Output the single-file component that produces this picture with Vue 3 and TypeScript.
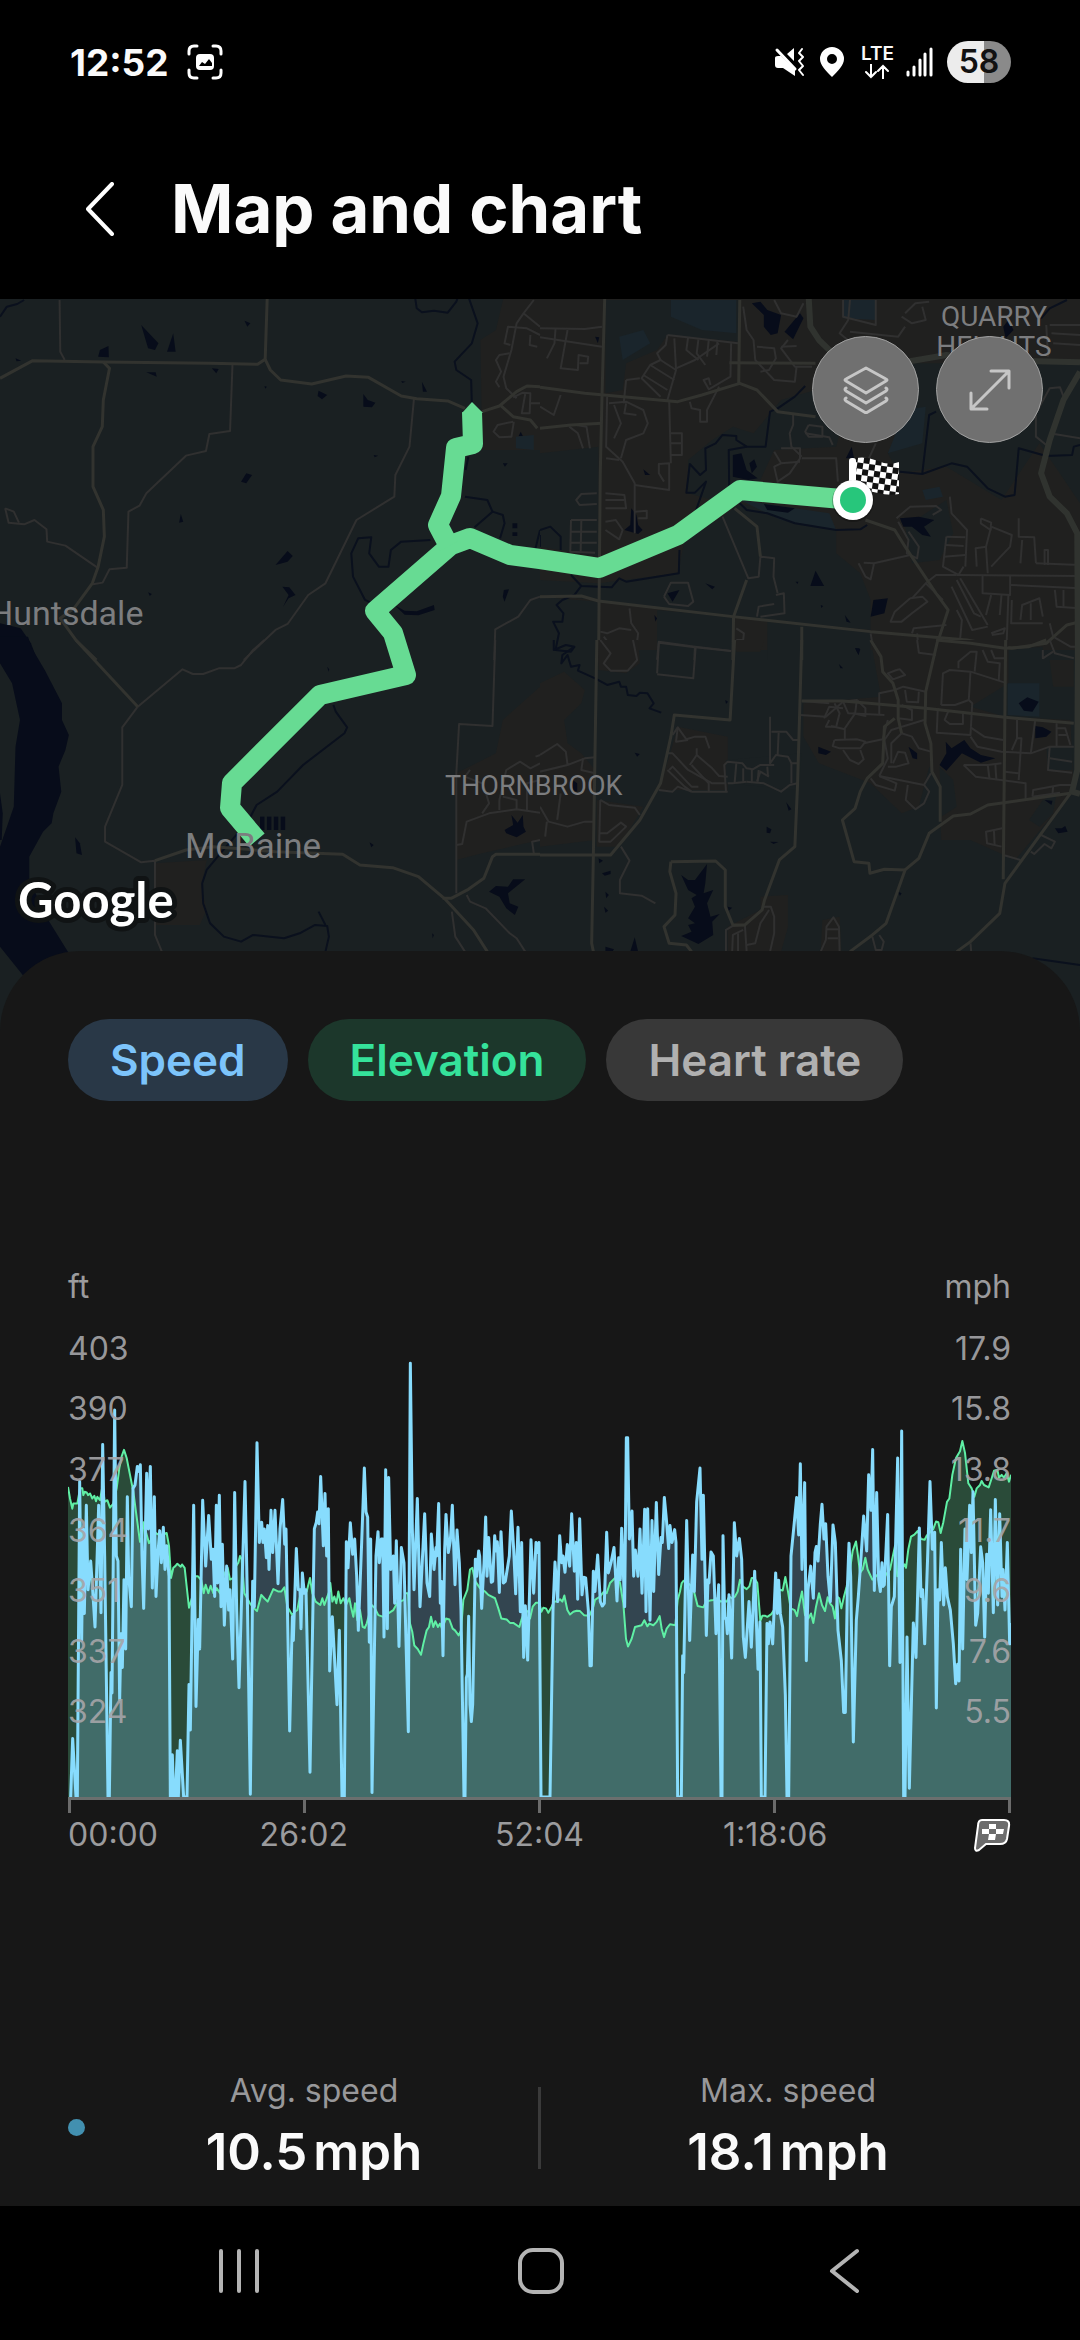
<script setup lang="ts">
import { computed, ref } from 'vue'

interface Tile {
  x: number
  y: number
  urban: string[]
  rural: string[]
  park: string[]
  water: string[]
  streams: string[]
  minor: string[]
  major: string[]
  highway: string[]
}

interface Segment {
  offset: number
  points: string
}

// Each tile covers 540 map units in width and has its own finer grid.
const tiles: Tile[] = [
  {
    x: 0,
    y: 300,
    urban: ['1465,-20 1568,-20 1568,450 1400,450 1395,120 1440,90'],
    rural: [],
    park: ['1498,410 1550,405 1550,450 1498,445'],
    water: [
      '410,75 460,130 450,150 430,145', '503,100 510,155 485,155', '315,138 316,172 285,170 290,150',
      '710,62 727,70 718,80', '425,217 452,217 455,230', '615,205 635,207 628,220',
      '925,272 950,285 935,298 922,288', '1055,282 1068,300 1090,308 1080,322 1055,320',
      '1225,245 1240,275 1228,275', '700,545 715,520 732,525 715,550', '525,642 532,665 520,668',
      '800,795 835,753 850,768 835,785', '820,860 840,862 858,885 838,895 822,920 838,885',
      '1463,870 1478,868 1465,905 1460,890', '0,970 60,985 90,1030 108,1080 0,1080',
      '1488,670 1502,670 1502,685 1488,685', '1488,697 1502,697 1502,708 1488,708',
      '45,175 62,182 48,184', '430,877 441,882 435,888', '1085,465 1098,467 1088,472', '1460,490 1474,490 1466,500',
      '1512,395 1518,408 1506,408', '768,258 775,260 770,266', '1165,243 1178,245 1168,249',
      '1145,915 1175,932 1210,934 1260,915 1262,930 1215,946 1175,944',
    ],
    streams: [
      '1205,-10 1210,25 1225,37 1260,32 1300,38 1325,5 1330,-10',
      '1360,-10 1387,70 1370,130 1320,185 1325,210 1368,240 1370,310',
      '0,50 20,20 50,12 70,0', '1350,590 1415,600 1430,635 1378,682', '1430,635 1460,645 1465,670 1452,715',
      '1250,720 1165,725 1135,750 1128,800 1100,800 1072,760 1078,712 1040,715 1020,760 1025,830 1060,900 1120,930',
      '1568,690 1555,745', '1360,470 1352,510',
    ],
    minor: [
      '173,0 175,155 188,180',
      '675,195 668,393 608,402 598,453 540,467 425,580 405,617 373,635 368,803 318,808 298,848 270,853',
      '15,625 25,668 70,673 100,660 135,688 137,725 190,737 283,803', '15,625 40,635 55,668',
      '1202,296 1189,440 1148,525 1145,590 1035,660 945,850 895,885 835,972 800,990 708,1080',
      '1568,890 1540,900 1505,950 1438,988 1435,1080',
      '1550,0 1520,40 1500,70 1485,150 1462,230 1470,265 1500,295', '1482,135 1465,130 1475,80 1530,85 1568,105',
      '1520,40 1568,80', '1480,160 1450,165 1440,180 1455,215 1440,245 1450,262',
      '1490,365 1445,375 1433,395 1450,412 1485,410 1492,365', '1490,292 1518,278 1540,280 1538,340 1515,340 1525,282',
      '1540,105 1538,135 1560,140', '1540,310 1568,310',
    ],
    major: [
      '0,235 95,182 300,186 610,190 748,193 770,178 776,-10',
      '770,178 785,210 815,240 905,252 1005,228 1070,232 1165,288 1210,296 1300,303 1350,325',
      '300,186 318,205 300,300 297,380 270,440 270,560 300,630 303,710 285,800 268,850 215,925 175,955 220,1020 280,1080',
      '1400,335 1450,318 1500,275 1530,258 1568,260', '1455,318 1490,350 1540,360 1560,385',
    ],
    highway: [],
  },
  {
    x: 540,
    y: 300,
    urban: [],
    rural: [
      '190,0 580,0 575,125 370,105 340,150 250,190 240,270 190,280',
      '0,460 170,440 170,770 0,740',
      '430,480 500,420 560,380 620,400 660,350 700,300 800,270 870,400 860,440 680,450 640,540 500,600 430,580',
      '0,840 170,850 400,820 420,720 530,650 580,610 860,690 860,760 930,820 960,900 960,990 560,950 170,900 0,885',
      '0,890 170,905 170,1080 0,1080', '340,930 560,950 560,1080 340,1080', '660,965 960,995 960,1080 660,1080',
      '1030,190 1568,190 1568,610 1450,430 1340,600 1180,500 1040,520 1010,460 1080,350',
      '1060,680 1180,600 1200,700 1160,780 1080,790', '1360,1050 1460,1040 1460,1080 1360,1080',
    ],
    park: [
      '380,0 570,0 570,100 470,90 380,50', '880,0 975,0 975,60 880,55', '230,110 300,90 320,130 240,180',
      '1060,330 1120,320 1110,430 1010,460', '580,600 840,640 860,690 700,660', '1110,570 1160,560 1170,590 1120,600',
    ],
    water: [
      '615,10 640,5 660,30 700,45 690,100 670,105 650,80 650,45', '710,95 755,40 765,55 735,118',
      '560,465 585,460 600,510 632,535 605,540 560,530', '608,490 622,478 630,500 615,520',
      '265,625 280,645 285,675 298,690 285,702 245,690 262,675', '800,812 825,858 785,858',
      '968,900 1010,895 1000,940 960,950', '1045,655 1100,650 1145,660 1115,680 1135,710 1110,705 1080,680 1055,680',
      '370,880 405,870 385,905', '480,850 508,860 500,868', '1360,60 1375,90 1352,115 1345,80', '905,440 912,475 888,475',
      '885,945 902,968 890,965', '300,508 320,525 305,525', '650,612 740,625 720,638 660,630', '915,1045 928,1045 925,1065',
      '160,110 172,112 168,130', '332,945 340,955 335,965', '742,845 750,845 748,852', '815,915 822,918 817,924',
    ],
    streams: [
      '770,258 740,290 690,325 668,335 655,440 600,440 570,420 570,408 530,405 510,430 480,445 482,510 465,525 435,492 425,578 450,578 482,545 450,640',
      '550,620 548,450 600,440', '580,610 600,630 660,640 740,670 860,690 930,688 950,675',
      '1568,435 1550,440 1545,465 1470,468 1390,445 1378,585 1350,590 1300,565 1240,500 1195,490 1110,522 1045,515',
      '1110,520 1130,345 1150,335', '1455,55 1480,25 1530,0', '405,750 403,820 250,845 230,835 208,862 120,858 90,825',
      '120,858 100,885 65,900 48,915 68,940 65,965 38,965 55,1000 45,1050 90,1055 100,1040', '0,690 30,680 60,710 60,750', '0,705 0,740',
    ],
    minor: [
      '0,85 130,87 180,80', '0,112 180,140', '45,87 42,130 20,175', '80,90 60,205 110,210 112,165 140,170 138,190 115,190',
      '0,320 40,345 60,285', '85,380 110,400 125,445', '105,375 135,380 145,445', '370,105 575,130', '370,105 365,135 340,160 350,180 320,195 295,235 350,290',
      '390,115 395,210 370,300', '320,195 390,240', '350,180 395,210', '300,225 370,270', '250,240 290,235', '250,240 243,310',
      '395,205 450,180 520,130', '430,112 425,150 460,180', '460,118 455,160 480,195', '490,120 485,170', '515,125 512,165', '555,130 553,230 490,268 475,240 490,235 495,255',
      '195,290 192,440 240,485 275,550 275,700', '200,310 250,305 300,330 313,370 300,400 250,420 235,475', '215,315 235,370 215,415', '250,310 245,340 280,345',
      '375,300 380,490', '380,400 412,400 412,465 380,465', '380,430 410,430', '192,475 230,480', '275,555 375,570 375,490 345,492 345,520 360,545',
      '435,305 440,325 465,330 465,365 485,365 485,330 520,260', '190,580 245,585 250,625 190,625', '190,600 245,600', '190,665 220,660 240,690 230,718 190,690', '275,635 310,632 310,655 285,655',
      '90,660 165,660', '90,660 88,755 160,758', '88,695 165,695', '88,728 165,728', '120,662 118,755', '165,580 120,582 105,600 115,615 165,612',
      '590,20 600,90 620,120 625,180 680,240 740,245 745,200', '630,140 680,145 685,175 665,210 640,215', '700,140 745,138', '720,120 700,145 740,200 790,200', '680,0 700,40 745,50 765,10',
      '735,345 735,375 725,400 730,440 760,470', '770,400 840,412 850,435', '780,375 820,380 820,410 780,410 770,395 780,375', '700,445 755,445 755,475 725,520 690,545 680,500 700,490 755,485', '680,455 700,490',
      '760,475 860,475 865,545', '975,430 955,475', '900,0 895,60 870,100 900,125 970,125', '880,0 880,50 975,75 975,0', '1060,40 1090,10 1130,5', '1050,50 1080,70 1120,60 1110,20', '900,95 1040,110 1060,80',
      '1480,75 1568,75', '1485,100 1568,105', '1490,130 1568,135', '1470,75 1475,170', '1440,340 1480,265 1510,262 1520,290', '1440,340 1440,410 1470,435', '1480,400 1568,415',
      '360,890 380,848 430,848 445,905 430,918 375,912 360,890', '530,650 605,835 635,830 640,770 680,775 678,830 690,880', '685,885 708,880 710,940 640,950', '630,950 635,920 680,912',
      '925,790 945,830 960,838 970,790 940,788', '970,790 1075,765', '260,925 265,970 285,1000 275,1080', '175,995 195,1000 230,985 265,990', '185,1010 200,1030 190,1060', '340,1080 345,1025 450,1040 555,1053', '450,1040 448,1080', '570,985 592,1000 590,1020 570,1020',
      '1035,655 1075,620 1150,618 1165,630 1140,645', '1040,665 1070,720 1065,760 1095,775 1100,740 1070,695', '1190,590 1195,640 1240,690 1235,800', '1180,710 1235,712', '1178,735 1230,738', '1172,770 1235,765', '1180,710 1170,800 1215,825 1230,800',
      '1280,655 1310,668 1308,690 1280,670 1280,655', '1310,680 1295,740 1300,820', '1295,740 1265,745 1268,800', '1310,680 1370,705 1365,740 1310,800', '1390,655 1390,710 1435,712 1440,790', '1400,720 1395,790', '1210,825 1568,828', '1440,790 1568,795',
      '1285,825 1285,880 1365,885 1365,828', '1365,855 1568,865', '1360,885 1355,1030', '1310,885 1295,945', '1340,885 1335,945', '1210,840 1260,940 1280,950', '1195,860 1255,990 1300,980', '1220,835 1300,975',
      '1075,895 1110,890 1125,905 1080,940 1050,965 1018,965 1030,935 1075,895', '1080,895 1120,850 1150,825 1210,825', '1120,850 1170,900', '1395,960 1400,915 1450,895 1460,950', '1425,910 1425,960', '1370,900 1368,970 1460,970',
      '1495,870 1500,920 1568,925', '1520,870 1520,920', '1310,1000 1350,985 1345,1000 1312,1005', '1475,795 1475,750 1465,750 1465,795', '1080,1000 1085,985 1180,975', '1095,1000 1100,1055 1150,1065',
      '960,1000 965,1030 990,1080', '1220,1020 1210,1080', '1210,930 1225,960 1220,1015', '1480,970 1490,1010 1540,1040 1568,1040', '1280,1025 1290,1060 1350,1070',
    ],
    major: [
      '188,-10 180,290 175,520 170,1080', '0,262 130,280 400,305 470,285 580,250 630,270 690,335 800,350', '0,385 90,375 180,370',
      '0,890 120,888 170,903 560,950 960,995 1240,1020 1370,1045 1470,1030 1530,975 1568,965', '945,660 1030,690 1060,740 1150,880 1185,930 1160,1010 1150,1080',
      '760,980 760,1080', '560,1080 562,950 600,840', '565,625 630,680 640,770', '580,0 577,250', '550,188 800,190', '1350,1040 1352,1080',
    ],
    highway: ['780,-10 785,80 810,120 860,170 960,200 1040,190 1180,165 1300,180 1568,187', '1568,215 1520,300 1480,420 1455,520 1480,590 1530,640 1560,700 1562,1080'],
  },
  {
    x: 0,
    y: 640,
    urban: ['450,670 600,660 585,740 600,810 580,855 450,855', '1568,140 1460,240 1440,340 1325,400 1325,660 1400,640 1568,600'],
    rural: [],
    park: [],
    water: [
      '0,-50 70,-50 90,20 130,90 180,190 180,240 200,285 190,330 170,380 178,455 155,520 150,550 125,575 85,650 85,720 140,840 200,940 70,1010 0,920 0,620 40,500 45,320 58,240 35,130 0,70',
      '0,460 8,520 5,600 0,600', '218,592 232,610 238,645 222,640', '755,530 768,530 768,570 755,570', '775,530 788,530 788,570 775,570',
      '795,530 808,530 808,570 795,570', '815,530 828,530 828,570 815,570', '1465,570 1490,555 1485,525 1503,548 1518,525 1520,560 1527,575 1500,592 1470,580',
      '1420,755 1440,738 1475,740 1490,718 1525,718 1475,760 1480,790 1505,800 1495,825 1470,805 1450,770', '1073,607 1085,615 1078,622', '950,80 956,88 954,95', '1255,880 1260,885 1256,895',
    ],
    streams: [
      '968,195 975,215 1008,262 1000,280 880,375 805,455 745,495 725,535', '690,580 640,640 600,690 587,730 590,790 610,850 650,890 700,905 735,885 825,895 870,880 915,855 950,858 955,890 945,935', '925,815 945,855',
    ],
    minor: [
      '768,0 735,30 700,75 680,85 635,85 590,102 560,102 530,88 400,200 355,262 355,435 305,560 305,605 410,667 450,662 450,885 470,935',
      '1438,0 1430,258 1333,252 1325,400 1325,760', '1325,615 1342,612 1355,545 1420,520 1500,508 1568,518',
      '1355,765 1365,785 1410,805 1480,880 1500,895 1525,935', '1312,815 1322,890 1350,935', '1400,520 1420,490 1405,440', '1450,510 1450,480 1470,390 1510,365 1540,385 1568,370',
      '1500,508 1500,480 1460,470', '1568,420 1530,430 1530,510', '1365,390 1350,410 1400,430', '1568,600 1545,605 1550,640', '1568,345 1555,350',
    ],
    major: [
      '220,0 400,200', '450,662 540,630 620,620 800,635 995,643 1045,675 1140,683 1215,710 1290,775 1375,870 1415,935',
      '1285,775 1310,775 1360,748 1405,715 1430,650 1440,643 1568,643',
    ],
    highway: [],
  },
  {
    x: 540,
    y: 640,
    urban: [
      '0,130 70,95 130,150 120,190 70,240 80,310 120,340 160,390 160,600 0,620', '165,0 285,0 290,70 250,100 170,90', '165,480 300,500 230,620 165,620',
      '400,260 545,290 545,450 345,450 375,350', '570,0 650,0 640,35 570,35', '960,0 1360,0 1360,130 1250,200 1350,230 1540,240 1550,450 1380,660 1250,600 1165,600 1160,430 1130,380 1100,500 1050,520 960,430 810,370 765,290 765,190 990,170',
      '1480,60 1550,60 1550,140 1490,140', '640,770 720,765 720,860 700,935 545,935 545,860 640,810', '820,840 870,830 875,935 815,935',
    ],
    rural: ['540,360 760,340 750,450 540,430', '1470,320 1545,320 1545,390 1475,390', '1160,380 1200,420 1210,500 1165,530', '1420,540 1460,480 1500,460 1490,520 1450,560'],
    park: ['1358,130 1450,130 1450,230 1358,225'],
    water: [
      '1390,190 1415,172 1448,185 1430,215 1405,212', '1438,258 1460,262 1485,275 1470,290 1438,295', '1160,375 1180,340 1178,305 1195,325 1232,300 1250,325 1280,345 1322,355 1280,368 1225,340 1180,392',
      '808,320 845,335 830,345 808,340', '1070,320 1095,340 1095,358 1082,355', '410,705 430,720 450,720 485,672 480,730 475,760 503,750 485,790 495,830 522,822 500,845 503,885 460,912 410,888 440,875 430,855 450,850 430,835 450,800 440,775 455,765 430,750',
      '275,892 285,935 262,935', '190,920 215,928 210,935 190,935', '715,487 730,508 722,512', '658,560 672,568 668,580 658,578', '668,605 692,606 678,612', '1495,565 1515,565 1525,558 1532,575 1505,580',
      '1465,480 1488,482 1485,495', '915,25 930,28 925,45', '868,72 880,85 872,85', '180,700 205,692 205,702 188,707', '190,755 200,765 192,775', '186,800 198,812 190,818', '275,338 290,342 282,350', '95,420 108,430 108,455 95,450',
      '170,655 183,662 172,670', '545,800 558,803 548,812', '1040,755 1050,760 1045,768', '538,180 546,185 540,192',
    ],
    streams: ['40,0 40,30 75,15 100,20 65,45 62,70 80,45 90,80 115,75 110,92 160,115 195,135 230,125 235,140 250,140 255,165 280,168 290,158 312,160 330,190 318,205 352,218', '1430,955 1568,975'],
    minor: [
      '340,100 345,8 450,22 555,33', '340,103 445,115 452,22', '175,0 205,40 185,70 205,92 255,92 282,60 270,0',
      '0,345 50,312 75,335 80,375 130,355 160,352', '80,375 0,395', '125,355 120,390 160,400', '0,500 25,545 80,560 130,545 160,545', '60,460 50,540', '20,545 15,590',
      '175,480 200,495 275,503 290,525', '175,480 172,605 205,605 250,560 235,548 195,580 175,580', '235,620 260,662 232,720 232,760 295,767 335,790',
      '345,450 385,455 400,440 440,455 545,455', '370,340 385,340 430,390 500,430 540,430', '375,390 385,380 440,440 460,440', '370,390 420,440 440,455', '435,375 455,345 455,325', '455,345 500,385 520,408 545,410', '440,375 490,430 490,455',
      '385,285 400,262 425,298 450,290 480,290 492,325', '400,262 395,305 430,300', '540,455 535,375 545,365 588,370 600,385 618,388', '545,430 560,430 600,425', '570,370 565,430', '590,385 590,425', '615,425 615,390 640,375 680,375',
      '668,230 668,370 685,345 720,350 730,370 748,370', '672,275 715,275 735,300 750,300', '693,278 690,345', '730,370 730,430', '630,425 640,395 665,410', '660,380 662,410', '600,425 650,430 700,455 725,435 748,430', '635,390 632,425',
      '755,225 830,230 880,185 920,180 945,205 945,228 910,220', '855,190 870,220 860,260 830,260 840,240', '880,205 840,200 825,235', '760,183 840,190', '880,185 895,220 1000,225', '920,180 915,220 885,265 885,300', '845,258 885,268',
      '855,300 850,318 870,325 930,325 945,305 920,298 855,300', '940,310 995,298 1010,240', '880,330 900,360 925,372 940,358 930,330', '985,225 985,160 1030,150 1055,140 1120,155', '1035,90 1010,100 1025,118 1060,105 1045,88 1035,90',
      '1060,150 1065,185 1098,187 1100,155', '1050,195 1080,210 1080,240 1040,235', '1115,240 1020,270 1000,300 1010,355 985,408', '1050,280 1080,290 1100,325 1135,335', '1010,380 1035,380 1070,370 1060,338 1040,335 1025,370', '1050,280 1020,310 1020,370',
      '960,415 975,435 1030,452 1035,430 985,408', '985,408 1115,435 1135,400', '1068,435 1062,480 1090,508 1115,490 1130,455 1115,435', '1165,195 1170,100 1190,90 1250,95 1350,128', '1250,95 1245,180 1255,190 1250,285 1152,278 1155,205',
      '1165,195 1205,195 1245,180', '1185,215 1175,240 1190,252 1228,252 1228,215', '1215,85 1215,65 1250,35 1268,35 1262,95', '1285,30 1300,65 1335,70 1332,120', '1310,30 1320,55 1350,55',
      '1250,262 1290,290 1345,300', '1250,290 1270,320 1340,335 1425,340 1480,320 1550,320', '1385,240 1385,295 1370,330', '1385,295 1398,295 1390,420', '1350,395 1390,400', '1230,375 1265,410 1410,430 1410,480', '1230,375 1300,375 1340,370', '1300,375 1305,415', '1322,372 1325,418',
      '1438,240 1425,340', '1480,320 1475,390 1545,398', '1480,355 1545,365', '1500,250 1500,318', '1500,265 1525,265 1540,315', '1505,285 1530,285', '1430,470 1432,450 1510,435 1545,435', '1430,470 1510,458', '1490,440 1488,462',
      '1342,565 1295,575 1298,610 1340,620', '1318,570 1320,615', '1345,645 1395,660', '1455,585 1495,605 1485,625 1465,612 1435,642 1425,635', '1095,0 1100,38 1150,45',
      '965,890 975,930 992,930 998,905 985,885', '815,935 830,900 832,860 852,832 868,860 870,935', '832,868 868,868', '835,895 865,895', '540,935 540,870 560,858 595,855 600,935', '558,935 560,885 590,870', '575,935 575,880', '650,800 670,800 680,830 680,880 668,935', '665,810 640,850 625,910 600,915',
      '1250,910 1252,935', '1480,0 1495,40 1550,55', '1460,30 1460,55 1490,35',
    ],
    major: [
      '165,0 155,645 150,910 155,935', '565,0 552,240 390,225 380,290 350,430 290,540 205,645 0,645',
      '380,665 510,663 538,690 538,800 560,855 595,855 645,810 652,780 695,660 740,620 748,430 760,0', '380,665 377,695 395,760 392,825 360,860 375,910 425,915 440,935',
      '760,183 880,183 1120,205 1350,232 1550,250', '960,0 990,50 995,95 1025,130 1040,180 1040,235 1050,280', '1155,0 1120,155 1118,250 1135,310 1138,395 1162,440 1162,545',
      '1030,235 1000,260 995,370 950,415 930,455 915,505 878,540 912,665 955,670 958,700 1000,688 1060,690', '1540,460 1300,495 1250,522 1200,528 1130,580 1100,655 1060,690 1005,850 965,885 900,935',
      '1352,0 1345,718', '1150,0 1250,10 1350,25 1420,20 1470,0', '1540,460 1350,730 1335,820 1250,905 1210,935',
    ],
    highway: ['1562,0 1560,390 1545,455 1568,462'],
  },
]

const routes = [
  '853,500 740,490 678,535 599,568 540,559 510,555 470,538 451,545 375,611 393,633 406,675 320,695 232,783 230,808 257,840',
  '472,412 473,444 456,448 451,496 438,525 449,546',
]

const speed: Segment[] = [
  {
    offset: -54,
    points:
      '62,1353 68,1180 78,1353 82,1353 89,420 95,890 99,560 103,810 109,490 114,740 122,655 128,740 135,850 146,490 153,808 158,310 164,640 174,1353 178,1353 183,985 186,1045 194,208 199,640 204,655 209,1065 213,870 217,970 222,710 227,915 232,465 236,700 244,790 249,440 255,430 262,375 267,390 271,370 276,640 281,795 290,395 295,560 301,375 307,735 313,465 318,760 324,630 329,565 334,660 340,555 345,680 350,610 357,700 361,1353 364,1353 367,1228 371,1353 376,1353 382,1216 385,1353 391,1185 401,1353 411,1353 417,1020 421,1155 431,490 438,1085 445,828 449,915 458,475 467,670 476,520 484,650 489,620 494,760 499,490 503,720 508,460 513,790 517,605 523,845 530,670 536,800 540,740 548,945 554,452 560,800 567,1030 585,420 592,760 601,1345 608,715 613,790 621,305 628,600 635,540 639,600 643,560 649,645 653,550 657,680 663,505 668,630 675,505 684,722 690,560 698,473 704,605 708,560 719,1158 727,820 730,890 739,618 745,740 750,740 753,855 757,690 763,750 768,740 780,1280 793,560 799,540 803,510 807,545 812,405 820,610 825,455 830,640 835,500 839,980 847,820 861,1080 868,860 876,1353 883,1353 889,598 894,675 901,542 908,635 914,590 920,700 925,860 935,600 943,380 948,510 953,525 958,895 962,590 966,1340 978,640 984,568 988,660 994,590 998,590 1002,880 1007,385 1012,855 1016,408 1022,680 1030,640 1034,780',
  },
  {
    offset: 936,
    points:
      '49,595 57,908 64,615 72,660 85,1160 91,70 97,560 102,740 112,470 120,790 134,515 141,720 149,760 154,575 162,680 168,615 170,640 176,485 181,780 184,715 189,935 194,620 198,517 205,630 211,595 217,490 225,725 231,563 238,660 243,800 252,1353 255,1353 259,1000 262,990 266,818 270,1080 274,1130 278,1080 286,650 290,700 296,625 299,640 305,795 312,660 317,525 321,700 326,585 334,718 338,715 344,580 348,625 352,598 358,748 363,568 370,720 376,715 388,640 394,507 401,620 407,752 414,555 421,805 425,600 431,940 436,787 443,948 453,592 461,750 468,600 473,630 477,600 483,1353 510,1353 519,800 525,658 533,775 539,580 545,660 549,640 555,688 562,606 569,670 575,515 583,685 589,600 593,768 599,530 606,755 612,703 617,705 625,800 630,965 634,965 640,685 645,745 653,637 661,775 667,788 673,780 680,570 685,690 693,660 702,615 711,773 716,645 721,710 725,558 734,790 739,290 743,290 748,590 756,507 761,700 766,622 774,700 780,560 786,750 794,502 798,805 803,500 810,830 816,535 821,745 829,482 836,695 843,585 847,600 853,467 859,530 866,618 870,550 876,600 884,562 888,600 893,1353 904,1353 908,935 911,985 920,535 929,890 938,637 943,745 950,480 960,380 966,650 970,460 979,875 984,710 987,720 993,628 1000,640 1008,870 1016,725 1023,1353 1026,1353',
  },
  {
    offset: 1896,
    points:
      '69,580 74,820 79,830 82,870 87,755 95,942 103,542 110,640 118,588 125,650 130,880 136,940 147,775 154,910 164,685 174,975 180,835 184,1353 195,1353 201,840 205,900 210,835 218,900 227,690 232,810 236,712 241,810 248,850 256,1050 261,1353 266,1353 273,640 281,560 290,467 296,578 301,367 306,680 314,423 319,950 324,740 332,670 340,765 345,630 349,612 354,655 361,545 366,487 372,590 377,545 384,700 391,775 399,548 406,600 414,860 424,950 431,1103 436,1103 442,740 447,602 452,700 460,1190 469,830 475,760 482,660 491,522 500,625 506,400 513,505 518,325 523,742 530,452 536,710 541,745 546,660 549,730 553,725 563,517 569,965 574,790 583,760 593,350 600,955 605,270 611,1353 615,1353 621,880 628,1327 640,838 648,940 658,557 663,760 668,740 674,900 683,640 690,420 697,620 704,570 709,1090 714,740 719,770 724,600 731,785 736,675 742,760 751,800 760,900 767,1018 773,960 777,1010 782,620 788,915 795,560 801,710 809,490 814,630 819,450 827,845 833,810 842,613 848,660 854,880 860,635 865,750 872,503 880,808 886,473 893,785 899,515 906,760 909,680 915,800 922,600 929,900 933,838',
  },
]

const elevation: Segment[] = [
  {
    offset: -54,
    points:
      '54,436 60,470 67,500 70,485 82,485 90,440 97,440 100,460 104,450 110,452 114,460 120,455 127,470 133,462 138,478 142,465 150,475 158,430 164,480 172,475 180,497 190,485 200,440 208,380 215,345 222,326 230,350 240,400 250,450 258,510 270,598 276,585 281,540 288,570 297,602 305,590 318,572 330,580 340,575 350,572 357,610 363,705 370,675 376,670 382,663 392,672 396,665 404,675 410,730 417,793 424,770 430,750 436,700 444,700 454,712 461,750 467,725 475,750 482,728 490,750 500,735 510,750 520,700 533,675 540,710 550,705 558,670 565,660 570,640 575,650 583,750 600,780 612,795 621,803 634,755 643,765 653,775 670,738 684,745 694,745 703,733 712,790 718,800 727,815 735,805 742,800 750,760 760,735 770,745 780,705 787,750 797,775 811,785 817,765 823,785 832,760 838,745 841,720 847,775 853,760 859,780 865,745 872,780 880,765 888,785 898,765 903,790 910,820 915,780 922,830 930,800 938,850 944,853 950,840 965,785 975,795 985,815 1000,820 1015,810 1030,800 1044,775',
  },
  {
    offset: 936,
    points:
      '60,775 72,770 76,750 84,750 90,840 97,865 103,905 113,915 123,932 130,900 140,860 147,850 153,820 160,850 166,833 174,850 180,840 186,855 198,825 208,828 218,855 225,860 236,875 243,860 250,770 262,740 270,680 277,675 286,715 300,735 315,745 325,755 345,765 355,795 364,825 380,828 390,838 400,838 418,850 424,830 435,800 445,805 450,825 458,790 468,778 478,778 484,805 490,793 498,795 505,808 515,790 522,775 530,775 540,768 547,775 553,757 562,800 570,813 580,805 590,802 600,803 612,815 628,817 640,790 645,770 660,760 672,745 680,750 690,720 700,710 710,700 720,720 730,780 738,885 744,908 755,885 765,850 785,845 793,830 802,848 808,840 820,845 830,835 839,818 845,855 852,880 860,855 870,842 886,845 893,770 900,745 905,720 911,713 920,718 930,725 942,745 953,788 970,792 978,775 990,772',
  },
  {
    offset: 1896,
    points:
      '40,770 52,765 62,775 72,772 80,775 88,760 95,765 105,760 113,745 120,710 128,730 140,738 148,730 155,705 163,705 172,720 181,832 187,817 196,817 202,820 214,812 222,800 230,760 240,740 248,742 256,702 264,745 272,795 284,800 291,818 297,785 306,745 315,815 325,825 333,810 340,838 348,790 357,750 366,785 375,803 383,762 390,780 398,790 405,825 411,760 418,765 424,795 432,760 440,730 450,680 458,625 468,597 474,640 480,690 488,680 496,645 503,680 517,710 528,700 538,690 550,710 560,692 570,680 585,610 592,700 606,675 614,665 618,675 625,620 633,583 643,577 653,566 663,590 674,592 680,580 690,570 700,560 708,538 715,540 722,572 730,540 741,480 748,470 757,400 768,350 780,330 787,300 795,335 805,425 815,440 823,465 830,440 840,430 845,418 852,430 866,437 875,410 882,388 892,385 897,408 905,400 912,408 920,395 927,420 933,400',
  },
]

const baseline = 1353

function joinSegments(segments: Segment[]): string {
  return segments
    .flatMap(({ offset, points }) =>
      points.split(' ').map((pair) => {
        const [x, y] = pair.split(',').map(Number)
        return `${x + offset},${y}`
      }),
    )
    .join(' ')
}

function closeArea(line: string): string {
  const pairs = line.split(' ')
  const first = pairs[0].split(',')[0]
  const last = pairs[pairs.length - 1].split(',')[0]
  return `${first},${baseline} ${line} ${last},${baseline}`
}

const speedLine = computed(() => joinSegments(speed))
const elevationLine = computed(() => joinSegments(elevation))

const metrics = ref([
  { id: 'speed', label: 'Speed', on: true },
  { id: 'elevation', label: 'Elevation', on: true },
  { id: 'heart', label: 'Heart rate', on: false },
])
const isOn = (id: string) => metrics.value.some((m) => m.id === id && m.on)

const feet = ['403', '390', '377', '364', '351', '337', '324']
const mph = ['17.9', '15.8', '13.8', '11.7', '9.6', '7.6', '5.5']
const times = ['00:00', '26:02', '52:04', '1:18:06']
</script>

<template>
  <div class="screen">
    <div class="status">
      <div class="status-side">
        <span class="clock">12:52</span>
        <svg class="ic-shot" viewBox="0 0 36 36" aria-hidden="true">
          <path d="M2 10V7q0-5 5-5h3M26 2h3q5 0 5 5v3M34 26v3q0 5-5 5h-3M10 34H7q-5 0-5-5v-3" fill="none" stroke="#fff" stroke-width="3" stroke-linecap="round" />
          <rect x="9" y="10" width="18" height="16" rx="4" fill="#fff" />
          <path d="M12 22l3-4 3 2 4-5 3 4v3z" fill="#000" />
        </svg>
      </div>
      <div class="status-side status-right">
        <svg class="ic-mute" viewBox="0 0 30 30" aria-hidden="true">
          <path d="M1 11q0-2 3-2h3l14 14v6L9 21H4q-3 0-3-3zM13 7l7-6v13z" fill="#fff" />
          <path d="M3 3l18 19" stroke="#fff" stroke-width="3" stroke-linecap="round" />
          <path d="M28 2l-3 4 4 4-4 4 4 5-4 4 4 5" fill="none" stroke="#fff" stroke-width="2" stroke-linejoin="round" stroke-linecap="round" />
        </svg>
        <svg class="ic-pin" viewBox="0 0 24 30" aria-hidden="true">
          <path d="M12 0a12 12 0 0 0-12 12c0 6 6 12 12 18 6-6 12-12 12-18A12 12 0 0 0 12 0zm0 7a5 5 0 1 1 0 10 5 5 0 0 1 0-10z" fill="#fff" fill-rule="evenodd" />
        </svg>
        <span class="lte">
          LTE
          <svg viewBox="0 0 24 15" aria-hidden="true">
            <path d="M6 0v13M1 8l5 5 5-5M18 15V2M13 7l5-5 5 5" fill="none" stroke="#fff" stroke-width="2" stroke-linecap="round" />
          </svg>
        </span>
        <svg class="ic-signal" viewBox="0 0 27 30" aria-hidden="true">
          <path d="M2 25v3M8 20v8M14 13v15M19 7v21M25 2v26" stroke="#fff" stroke-width="3" stroke-linecap="round" />
        </svg>
        <span class="battery">58</span>
      </div>
    </div>

    <header class="header">
      <button class="back" aria-label="Navigate up">
        <svg viewBox="0 0 28 54" aria-hidden="true"><path d="M26 2L2 27l24 25" fill="none" stroke="#fff" stroke-width="4" stroke-linecap="round" stroke-linejoin="round" /></svg>
      </button>
      <h1>Map and chart</h1>
    </header>

    <section class="map" aria-label="Route map">
      <svg class="map-canvas" viewBox="0 299 1080 732" role="img" aria-label="Workout route">
        <defs>
          <pattern id="checks" width="12" height="12" patternUnits="userSpaceOnUse" patternTransform="rotate(8 855 458)">
            <rect width="12" height="12" fill="#fff" />
            <rect width="6" height="6" fill="#111" />
            <rect x="6" y="6" width="6" height="6" fill="#111" />
          </pattern>
          <clipPath id="tile-clip"><rect y="-10" width="1570" height="1200" /></clipPath>
        </defs>
        <rect y="299" width="540" height="732" class="rural" />
        <rect x="540" y="299" width="540" height="361" class="urban" />
        <rect x="540" y="650" width="540" height="381" class="rural" />
        <g v-for="(tile, i) in tiles" :key="i" class="tile" clip-path="url(#tile-clip)" :transform="`translate(${tile.x} ${tile.y}) scale(.3444 .3333)`">
          <polygon v-for="p in tile.urban" :key="p" :points="p" class="urban" />
          <polygon v-for="p in tile.rural" :key="p" :points="p" class="rural" />
          <polygon v-for="p in tile.park" :key="p" :points="p" class="park" />
          <polygon v-for="p in tile.water" :key="p" :points="p" class="water" />
          <polyline v-for="p in tile.streams" :key="p" :points="p" class="stream" />
          <polyline v-for="p in tile.minor" :key="p" :points="p" class="minor" />
          <polyline v-for="p in tile.major" :key="p" :points="p" class="major" />
          <polyline v-for="p in tile.highway" :key="p" :points="p" class="highway" />
        </g>
        <polyline v-for="r in routes" :key="r" :points="r" class="route" />
        <polygon points="462,413 472,402 483,413" fill="#67db93" />
        <g class="places">
          <text x="-11" y="625" font-size="34">Huntsdale</text>
          <text x="185" y="858" font-size="35">McBaine</text>
          <text x="445" y="795" font-size="27">THORNBROOK</text>
          <text x="994" y="326" font-size="28" text-anchor="middle">QUARRY</text>
          <text x="994" y="356" font-size="28" text-anchor="middle">HEIGHTS</text>
        </g>
        <rect x="849" y="458" width="7" height="40" rx="3" fill="#fff" />
        <path d="M856 458q11-2 22 3t21 1v32q-10 2-21-1t-22-2z" fill="url(#checks)" />
        <circle cx="853" cy="501" r="21" fill="#000" opacity=".25" />
        <circle cx="853" cy="500" r="20" fill="#fff" />
        <circle cx="853" cy="500" r="13" fill="#27c67b" />
        <text x="18" y="918" class="google">Google</text>
      </svg>
      <div class="map-tools">
        <button class="round" aria-label="Map type">
          <svg viewBox="0 0 46 48" aria-hidden="true">
            <path d="M23 2l20 11q2 1 0 2L23 27 3 15q-2-1 0-2zM3 22q-2 1 0 3l20 12 20-12q2-2 0-3M3 32q-2 1 0 3l20 12 20-12q2-2 0-3" />
          </svg>
        </button>
        <button class="round" aria-label="Expand map">
          <svg viewBox="0 0 46 48" aria-hidden="true"><path d="M5 42L41 6M24 5h18v17M4 27v16h16" /></svg>
        </button>
      </div>
    </section>

    <main class="sheet">
      <div class="chips">
        <button v-for="m in metrics" :key="m.id" class="chip" :class="[m.id]" :aria-pressed="m.on" @click="m.on = !m.on">
          {{ m.label }}
        </button>
      </div>

      <section class="chart" aria-label="Speed and elevation over time">
        <div class="units"><span>ft</span><span>mph</span></div>
        <div class="plot">
          <svg viewBox="0 -64 2829 1417" preserveAspectRatio="none" role="img" aria-label="Speed and elevation">
            <polygon v-if="isOn('elevation')" :points="closeArea(elevationLine)" class="area-elevation" />
            <polygon v-if="isOn('speed')" :points="closeArea(speedLine)" class="area-speed" />
            <polyline v-if="isOn('elevation')" :points="elevationLine" class="line-elevation" />
            <polyline v-if="isOn('speed')" :points="speedLine" class="line-speed" />
          </svg>
          <ul class="scale"><li v-for="v in feet" :key="v">{{ v }}</li></ul>
          <ul class="scale scale-right"><li v-for="v in mph" :key="v">{{ v }}</li></ul>
        </div>
        <div class="ticks"><i v-for="n in 5" :key="n"></i></div>
        <div class="times">
          <span v-for="t in times" :key="t">{{ t }}</span>
          <svg viewBox="0 0 38 34" aria-label="Finish" role="img">
            <path d="M9 2h22q6 0 5 6l-2 13q-1 5-7 5H13l-7 6q-4 2-4-2l3-22q0-6 4-6z" fill="#6c6c6c" stroke="#fff" stroke-width="2" />
            <path d="M16 6h7v5h-7zM9 11h7v5H9zM23 11h8l-1 5h-7zM16 16h7l-1 6h-7z" fill="#fff" />
          </svg>
        </div>
      </section>

      <section class="stats">
        <div class="stat-left">
          <i class="dot"></i>
          <dl class="stat"><dt>Avg. speed</dt><dd><span>10.5</span><span>mph</span></dd></dl>
        </div>
        <i class="divider"></i>
        <dl class="stat stat-right"><dt>Max. speed</dt><dd><span>18.1</span><span>mph</span></dd></dl>
      </section>
    </main>

    <nav class="navbar" aria-label="System">
      <button aria-label="Recents">
        <svg viewBox="0 0 46 46" aria-hidden="true"><path d="M5 3v40M23 3v40M41 3v40" /></svg>
      </button>
      <button aria-label="Home">
        <svg viewBox="0 0 46 46" aria-hidden="true"><rect x="2" y="2" width="42" height="42" rx="13" /></svg>
      </button>
      <button aria-label="Back">
        <svg viewBox="0 0 46 46" aria-hidden="true"><path d="M36 3L11 23l25 20" /></svg>
      </button>
    </nav>
  </div>
</template>

<style>
body {
  background: #000;
}
</style>

<style scoped>
.screen {
  display: flex;
  flex-direction: column;
  min-height: 100vh;
  background: #000;
  color: #fafafa;
  font-family: Inter, Roboto, sans-serif;
}
button {
  padding: 0;
  border: 0;
  background: none;
  color: inherit;
  font: inherit;
}
svg {
  display: block;
}
ul,
dl,
dd,
h1 {
  margin: 0;
  padding: 0;
  list-style: none;
}

.status {
  display: flex;
  justify-content: space-between;
  padding: 38px 69px 0 70px;
}
.status-side {
  display: flex;
  align-items: center;
  height: 48px;
}
.clock {
  font-size: 37px;
  font-weight: 700;
}
.ic-shot {
  width: 36px;
  margin-left: 18px;
}
.ic-mute {
  width: 30px;
}
.ic-pin {
  width: 24px;
  margin-left: 16px;
}
.lte {
  margin-left: 17px;
  font-size: 19px;
  font-weight: 600;
  line-height: 18px;
}
.lte svg {
  width: 24px;
  margin: 1px auto 0;
}
.ic-signal {
  width: 27px;
  margin-left: 12px;
}
.battery {
  width: 64px;
  margin-left: 14px;
  border-radius: 21px;
  background: linear-gradient(90deg, #ececec 58%, #8a8a8a 58%);
  color: #111;
  font-size: 32px;
  font-weight: 600;
  line-height: 42px;
  text-align: center;
}

.header {
  display: flex;
  align-items: center;
  gap: 57px;
  padding: 79px 86px 46px;
}
.back svg {
  width: 28px;
}
.header h1 {
  font-size: 67px;
  font-weight: 700;
  line-height: 88px;
}

.map {
  position: relative;
}
.map-canvas {
  width: 100%;
}
.urban {
  fill: #20201f;
}
.rural {
  fill: #1a2022;
}
.park {
  fill: #1a252c;
}
.water {
  fill: #070c1a;
}
.tile polyline {
  fill: none;
  vector-effect: non-scaling-stroke;
  stroke-linejoin: round;
}
.stream {
  stroke: #0a101d;
  stroke-width: 2;
}
.minor {
  stroke: #303030;
  stroke-width: 2;
}
.major {
  stroke: #32332f;
  stroke-width: 3;
}
.highway {
  stroke: #30332f;
  stroke-width: 6;
}
.route {
  fill: none;
  stroke: #67db93;
  stroke-width: 20;
  stroke-linejoin: round;
}
.places {
  fill: #7c7d7f;
  font-family: Roboto, sans-serif;
}
.google {
  fill: #fff;
  stroke: #101314;
  stroke-width: 10;
  stroke-linejoin: round;
  paint-order: stroke;
  font-family: Lato, sans-serif;
  font-size: 49px;
  font-weight: 700;
}
.map-tools {
  position: absolute;
  top: 37px;
  right: 37px;
  display: flex;
  gap: 17px;
}
.round {
  display: grid;
  place-items: center;
  width: 107px;
  height: 107px;
  border: 1px solid #a0a0a0;
  border-radius: 50%;
  background: #707070;
}
.round svg {
  width: 46px;
  fill: none;
  stroke: #c6c6c6;
  stroke-width: 3;
  stroke-linecap: round;
  stroke-linejoin: round;
}

.sheet {
  position: relative;
  flex: 1;
  margin-top: -80px;
  padding: 68px 69px 18px 68px;
  border-radius: 80px 80px 0 0;
  background: #171717;
}
.chips {
  display: flex;
  gap: 20px;
}
.chip {
  padding: 0 42px;
  border-radius: 41px;
  font-size: 44px;
  font-weight: 600;
  line-height: 82px;
}
.speed {
  background: #293847;
  color: #7cc4fb;
}
.elevation {
  background: #1c372b;
  color: #35e29b;
}
.heart {
  background: #383838;
  color: #b0b0b0;
}

.chart {
  margin-top: 155px;
  color: #9b9b9d;
  font-size: 32px;
}
.units {
  display: flex;
  justify-content: space-between;
  line-height: 62px;
}
.plot {
  position: relative;
  height: 479px;
  border-bottom: 3px solid #6b6f6e;
}
.plot svg {
  width: 100%;
  height: 100%;
}
.plot polyline {
  fill: none;
  vector-effect: non-scaling-stroke;
  stroke-linejoin: round;
  stroke-width: 2;
}
.area-elevation {
  fill: #2a4b39;
}
.area-speed {
  fill: rgba(135, 206, 250, 0.25);
}
.line-elevation {
  stroke: #5fefa5;
}
.plot .line-speed {
  stroke: #87dcfd;
  stroke-width: 3;
}
.scale {
  position: absolute;
  top: 0;
  bottom: 55px;
  left: 0;
  display: flex;
  flex-direction: column;
  color: rgba(165, 165, 168, 0.92);
}
.scale-right {
  right: 0;
  left: auto;
  text-align: right;
}
.scale li {
  display: grid;
  flex: 1;
  align-items: center;
}
.ticks {
  display: flex;
  justify-content: space-between;
}
.ticks i {
  width: 3px;
  height: 13px;
  background: #6b6b6b;
}
.times {
  display: grid;
  grid-template-columns: 1fr 2fr 2fr 2fr 1fr;
  align-items: center;
  justify-items: center;
  margin-top: 2px;
  line-height: 40px;
}
.times span:first-child {
  justify-self: start;
}
.times svg {
  width: 38px;
  justify-self: end;
}

.stats {
  display: grid;
  grid-template-columns: 1fr 3px 1fr;
  align-items: center;
  margin-top: 216px;
}
.stat-left {
  display: flex;
  align-items: center;
  gap: 5px;
}
.dot {
  width: 17px;
  height: 17px;
  border-radius: 50%;
  background: #4290b0;
}
.divider {
  height: 82px;
  background: #3a3a3a;
}
.stat {
  flex: 1;
  text-align: center;
}
.stat-right {
  padding-left: 24px;
}
.stat dt {
  color: #98989a;
  font-size: 32px;
  line-height: 40px;
}
.stat dd {
  display: flex;
  justify-content: center;
  gap: 6px;
  margin-top: 9px;
  font-size: 51px;
  font-weight: 600;
  line-height: 64px;
}

.navbar {
  display: flex;
  justify-content: space-around;
  padding: 42px 85px 46px 88px;
}
.navbar svg {
  width: 46px;
  fill: none;
  stroke: #b4b4b4;
  stroke-width: 4;
  stroke-linecap: round;
  stroke-linejoin: round;
}
</style>
